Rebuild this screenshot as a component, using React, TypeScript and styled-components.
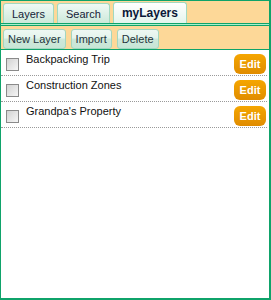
import React from 'react';
import styled, { createGlobalStyle } from 'styled-components';

const GlobalStyle = createGlobalStyle`
  html, body {
    margin: 0;
    padding: 0;
    background: #ffffff;
  }
  body {
    font-family: "Liberation Sans", Arial, sans-serif;
  }
`;

const green = '#0fa36a';
const peach = '#fdd898';

const layers = [
  { id: 1, name: 'Backpacking Trip' },
  { id: 2, name: 'Construction Zones' },
  { id: 3, name: "Grandpa's Property" },
];

const tabs = ['Layers', 'Search', 'myLayers'];

export default function App() {
  return (
    <>
      <GlobalStyle />
      <Panel>
        <TabBar>
          {tabs.map(tab => (
            <Tab key={tab} $active={tab === 'myLayers'}>
              {tab}
            </Tab>
          ))}
        </TabBar>
        <Divider />
        <Toolbar>
          <ToolButton>New Layer</ToolButton>
          <ToolButton>Import</ToolButton>
          <ToolButton>Delete</ToolButton>
        </Toolbar>
        <LayerList>
          {layers.map(layer => (
            <LayerRow key={layer.id}>
              <Check type="checkbox" aria-label={layer.name} />
              <LayerName>{layer.name}</LayerName>
              <EditButton>Edit</EditButton>
            </LayerRow>
          ))}
        </LayerList>
      </Panel>
    </>
  );
}

const Panel = styled.div`
  box-sizing: border-box;
  width: 271px;
  height: 300px;
  border-style: solid;
  border-color: ${green};
  border-width: 1px 2px 2px 1px;
  display: flex;
  flex-direction: column;
  background: #ffffff;
`;

const TabBar = styled.div`
  display: flex;
  align-items: flex-end;
  gap: 3px;
  height: 22px;
  padding: 0 2px;
  background: ${peach};
  border-bottom: 1px solid ${green};
`;

const Tab = styled.div<{ $active?: boolean }>`
  box-sizing: border-box;
  height: ${({ $active }) => ($active ? '21px' : '20px')};
  padding: 0 8px;
  display: flex;
  align-items: center;
  border: 1px solid #a2d9c0;
  border-bottom: none;
  border-radius: 3px 3px 0 0;
  background: ${({ $active }) =>
    $active
      ? 'linear-gradient(#ffffff, #e4f5ed)'
      : 'linear-gradient(#f0f9f5, #cce9da)'};
  font-size: ${({ $active }) => ($active ? '12px' : '11px')};
  font-weight: ${({ $active }) => ($active ? 'bold' : 'normal')};
  color: ${({ $active }) => ($active ? '#0a1838' : '#152238')};
  cursor: pointer;
`;

const Divider = styled.div`
  height: 1px;
  background: #a8f0cd;
  border-bottom: 1px solid ${green};
`;

const Toolbar = styled.div`
  display: flex;
  align-items: flex-start;
  gap: 5px;
  height: 24px;
  padding: 3px 2px 0;
  box-sizing: border-box;
  background: ${peach};
  border-bottom: 1px solid ${green};
`;

const ToolButton = styled.button`
  box-sizing: border-box;
  height: 20px;
  padding: 0 4px;
  border: 1px solid #a3d6bf;
  border-radius: 3px;
  background: linear-gradient(#eef8f3 0%, #e4f4ec 45%, #cde8da 50%, #c8e5d6 100%);
  font-family: "Liberation Sans", Arial, sans-serif;
  font-size: 11px;
  color: #24343c;
  cursor: pointer;
`;

const LayerList = styled.div`
  display: flex;
  flex-direction: column;
  padding-right: 2px;
`;

const LayerRow = styled.div`
  display: flex;
  align-items: flex-start;
  height: 25px;
  padding: 0 1px 0 5px;
  border-bottom: 1px dotted #9a9a9a;
`;

const Check = styled.input`
  appearance: none;
  box-sizing: border-box;
  width: 13px;
  height: 13px;
  margin: 8px 7px 0 0;
  border: 1px solid #8a8a8a;
  background: linear-gradient(135deg, #d2d2d2, #f6f6f6);
  flex-shrink: 0;
`;

const LayerName = styled.span`
  flex: 1;
  padding-top: 3px;
  font-size: 11px;
  line-height: 13px;
  color: #111111;
`;

const EditButton = styled.button`
  box-sizing: border-box;
  width: 32px;
  height: 20px;
  margin-top: 4px;
  padding: 0;
  border: none;
  border-radius: 6px;
  background: linear-gradient(#f5a600, #e08c00);
  font-family: "Liberation Sans", Arial, sans-serif;
  font-size: 11px;
  font-weight: bold;
  color: #ffffff;
  cursor: pointer;
`;
